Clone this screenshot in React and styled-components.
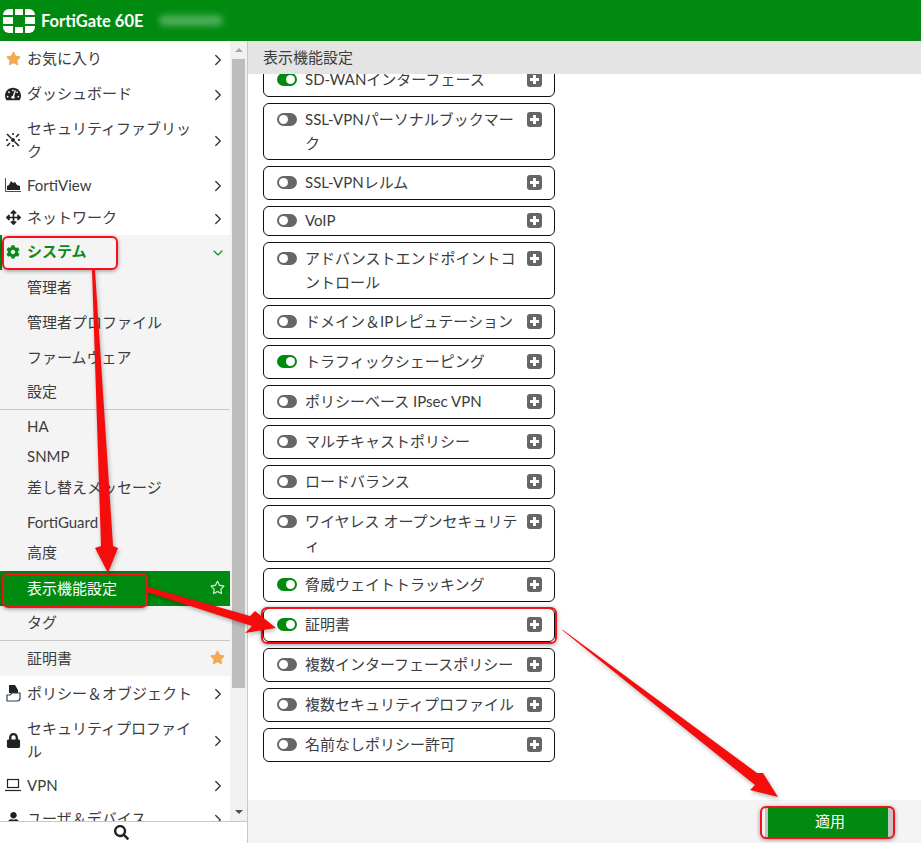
import React from "react";
import styled, { createGlobalStyle } from "styled-components";
import { FaTachometerAlt, FaCog, FaArrowsAlt, FaLock, FaSearch, FaUser, FaStar, FaRegStar } from "react-icons/fa";
import { ChevronRight, ChevronDown } from "lucide-react";

const Global = createGlobalStyle`
  html, body { margin: 0; height: 100%; overflow: hidden; background: #fff; }
  * { box-sizing: border-box; }
  body { font-family: "Lato", "Noto Sans CJK JP", sans-serif; font-size: 15px; color: #3c3c3c; }
`;
const Page = styled.div`position: relative; width: 921px; height: 843px; display: flex; flex-direction: column; overflow: hidden;`;
const Header = styled.header`height: 41px; flex: none; background: #008a10; display: flex; align-items: center; padding-left: 3px; color: #fff;`;
const Brand = styled.span`font-weight: 700; font-size: 16.5px; margin-left: 6px; white-space: nowrap;`;
const Blur = styled.span`width: 64px; height: 11px; margin-left: 16px; background: rgba(255,255,255,.3); filter: blur(3px); border-radius: 5px;`;
const Body = styled.div`flex: 1; display: flex; min-height: 0;`;
const Sidebar = styled.aside`width: 248px; flex: none; border-right: 1px solid #c8c8c8; display: flex; flex-direction: column;`;
const SideTop = styled.div`flex: 1; display: flex; min-height: 0;`;
const Nav = styled.nav`width: 230px; flex: none; overflow: hidden;`;
const Row = styled.div`
  height: ${p => p.$h || 35}px; flex: none; display: flex; align-items: center;
  padding-left: ${p => p.$sub ? 27 : 0}px;
  padding-bottom: ${p => Math.max(p.$lift || 0, 0)}px;
  padding-top: ${p => Math.max(-(p.$lift || 0), 0)}px;
  background: ${p => p.$active ? "#008a10" : "transparent"};
  color: ${p => p.$active ? "#fff" : p.$open ? "#0b8a1a" : "inherit"};
  font-weight: ${p => p.$open ? 700 : 400};
  box-shadow: ${p => p.$open ? "inset 2px 0 0 #008a10" : "none"};
`;
const IconSlot = styled.span`width: 27px; flex: none; display: flex; align-items: center; justify-content: center; padding-right: 1px; color: #222;`;
const Label = styled.span`flex: 1; line-height: 23px; max-width: 168px; margin-right: auto;`;
const Arrow = styled.span`width: 24px; margin-left: auto; padding-top: 2px; display: flex; justify-content: center; color: #333;`;
const EndStar = styled.span`margin-left: auto; margin-right: 5px; display: flex; color: ${p => p.$c};`;
const Section = styled.div`background: #f4f4f4;`;
const Sep = styled.div`height: 1px; background: #c8c8c8;`;
const Scroll = styled.div`width: 17px; flex: none; background: #f1f1f1; display: flex; flex-direction: column; align-items: center;`;
const ScrollBtn = styled.div`height: 18px; flex: none; display: flex; align-items: center; justify-content: center;`;
const Tri = styled.div`width: 0; height: 0; border-left: 4px solid transparent; border-right: 4px solid transparent;
  ${p => p.$up ? "border-bottom: 4px solid #a8a8a8;" : "border-top: 4px solid #505050;"}`;
const Thumb = styled.div`width: 13px; height: 629px; background: #bdbdbd; flex: none;`;
const Gap = styled.div`flex: 1;`;
const SearchBar = styled.div`height: 22px; flex: none; border-top: 1px solid #c8c8c8; display: flex; align-items: center; justify-content: center; color: #222; padding-right: 4px;`;
const Main = styled.main`flex: 1; display: flex; flex-direction: column; min-width: 0;`;
const TitleBar = styled.div`height: 33px; flex: none; background: #e4e4e4; display: flex; align-items: center; padding: 0 0 3px 15px;`;
const Content = styled.div`flex: 1; min-height: 0; overflow: hidden; padding-left: 15px;`;
const List = styled.div`width: 292px; margin-top: -11px; display: flex; flex-direction: column; gap: 6px;`;
const Card = styled.div`
  height: ${p => p.$h || 34}px; flex: none; background: #fff; border: 1px solid #111; border-radius: 6px;
  display: flex; align-items: flex-start; padding: ${p => p.$top || 5}px 12px 0 13px; color: #3c3c3c;
`;
const Toggle = styled.span`
  width: 20px; height: 13px; flex: none; margin-top: 4px; border-radius: 7px; position: relative;
  background: ${p => p.$on ? "#008a10" : "#666"};
  &::after { content: ""; position: absolute; top: 2px; width: 9px; height: 9px; border-radius: 50%; background: #fff;
    ${p => p.$on ? "right: 2px;" : "left: 2px;"} }
`;
const CardText = styled.span`flex: 1; margin-left: 8px; line-height: 24px; margin-top: -2px; white-space: normal;`;
const Plus = styled.span`width: 15px; height: 15px; flex: none; margin-top: 3px; margin-left: 6px; background: #666; border-radius: 3px; position: relative;
  &::before { content: ""; position: absolute; left: 3px; top: 6px; width: 9px; height: 3px; background: #fff; }
  &::after { content: ""; position: absolute; left: 6px; top: 3px; width: 3px; height: 9px; background: #fff; }
`;
const Footer = styled.div`height: 43px; flex: none; background: #f4f4f4; display: flex; justify-content: flex-end; padding: 8px 33px 6px 0;`;
const Apply = styled.button`width: 120px; height: 29px; border: 0; background: #008a10; color: #fff; font: inherit; padding: 0 0 4px 4px; box-shadow: -3px 0 0 #c4c4c4, 5px 0 0 #c4c4c4;`;
const Mark = styled.div`
  position: absolute; left: ${p => p.$x}px; top: ${p => p.$y}px; width: ${p => p.$w}px; height: ${p => p.$ht}px;
  border: 2px solid #f4111b; border-radius: 6px; box-shadow: 0 1px 4px rgba(0,0,0,.4); pointer-events: none;
`;
const Overlay = styled.svg`position: absolute; left: 0; top: 0; pointer-events: none; filter: drop-shadow(1px 2px 2px rgba(0,0,0,.3));`;

const Logo = () => (
  <svg width="32" height="24" viewBox="0 0 32 24" fill="#fff">
    <path d="M0 6a6 6 0 0 1 6-6h4v6H0z" /><rect x="12" y="0" width="8" height="6" /><path d="M22 0h4a6 6 0 0 1 6 6H22z" />
    <rect x="0" y="8" width="10" height="7" /><rect x="22" y="8" width="10" height="7" />
    <path d="M0 17h10v7H6a6 6 0 0 1-6-6z" /><rect x="12" y="18" width="8" height="6" /><path d="M22 17h10v1a6 6 0 0 1-6 6h-4z" />
  </svg>
);
const Fabric = () => (
  <svg width="16" height="16" viewBox="0 0 16 16" stroke="#222" strokeWidth="1.500" fill="#222">
    <path d="M2 2l4.500 4.500M14 14l-4.500-4.500M14 2l-3 3M2 14l3-3M8 1v2M1 8h2M15 8h-2M8 15v-2" />
    <circle cx="8" cy="8" r="1.200" />
  </svg>
);
const Area = () => (
  <svg width="16" height="14" viewBox="0 0 16 14">
    <path d="M0.500 0v13.500H16" fill="none" stroke="#33506b" strokeWidth="1" />
    <path d="M2 12V8l2-1 2-4 2 2 2-1 2 3 3 1v4z" fill="#222" />
  </svg>
);
const Folder = () => (
  <svg width="15" height="18" viewBox="0 0 15 18">
    <path d="M3 1h6l3 5v3H3z" fill="#222" />
    <path d="M1 17v-6h3l2-2h8v5a3 3 0 0 1-3 3z" fill="#fff" stroke="#33405b" strokeWidth="1.200" />
  </svg>
);
const Laptop = () => (
  <svg width="16" height="14" viewBox="0 0 16 14" fill="none" stroke="#222" strokeWidth="1.200">
    <rect x="2.500" y="1.500" width="11" height="8" /><path d="M0 12.500h16" />
  </svg>
);

const Cr = () => <Arrow><ChevronRight size={18} strokeWidth={1.700} /></Arrow>;
const Top = ({ icon, label, h, lift }) => (
  <Row $h={h} $lift={lift}><IconSlot>{icon}</IconSlot><Label>{label}</Label><Cr /></Row>
);

const features = [
  ["SD-WANインターフェース", 1], ["SSL-VPNパーソナルブックマーク", 0, 57], ["SSL-VPNレルム", 0],
  ["VoIP", 0, 30, 3], ["アドバンストエンドポイントコントロール", 0, 57], ["ドメイン＆IPレピュテーション", 0],
  ["トラフィックシェーピング", 1], ["ポリシーベース IPsec VPN", 0], ["マルチキャストポリシー", 0], ["ロードバランス", 0],
  ["ワイヤレス オープンセキュリティ", 0, 57], ["脅威ウェイトトラッキング", 1], ["証明書", 1],
  ["複数インターフェースポリシー", 0], ["複数セキュリティプロファイル", 0], ["名前なしポリシー許可", 0],
];

export default function App() {
  return (
    <Page>
      <Global />
      <Header><Logo /><Brand>FortiGate 60E</Brand><Blur /></Header>
      <Body>
        <Sidebar>
          <SideTop>
            <Nav>
              <Top icon={<FaStar size={15} color="#f5a852" />} label="お気に入り" />
              <Top icon={<FaTachometerAlt size={16} />} label="ダッシュボード" />
              <Top icon={<Fabric />} label="セキュリティファブリック" h={57} />
              <Top icon={<Area />} label="FortiView" h={34} />
              <Top icon={<FaArrowsAlt size={15} />} label="ネットワーク" h={33} lift={2} />
              <Section>
                <Row $open $lift={2}>
                  <IconSlot><FaCog size={14} color="#0b8a1a" /></IconSlot>
                  <Label>システム</Label>
                  <Arrow><ChevronDown size={16} strokeWidth={1.700} color="#0b8a1a" /></Arrow>
                </Row>
                <Row $sub $lift={2}>管理者</Row>
                <Row $sub $lift={3}>管理者プロファイル</Row>
                <Row $sub $lift={2}>ファームウェア</Row>
                <Row $sub $h={34} $lift={3}>設定</Row>
                <Sep />
                <Row $sub $h={32}>HA</Row>
                <Row $sub $h={30} $lift={2}>SNMP</Row>
                <Row $sub $h={33} $lift={5}>差し替えメッセージ</Row>
                <Row $sub $h={33}>FortiGuard</Row>
                <Row $sub $h={33} $lift={7}>高度</Row>
                <Row $sub $active $lift={3}>
                  表示機能設定
                  <EndStar $c="#cfe8d0"><FaRegStar size={15} /></EndStar>
                </Row>
                <Row $sub $h={34} $lift={3}>タグ</Row>
                <Sep />
                <Row $sub $lift={2}>
                  証明書
                  <EndStar $c="#f5a852"><FaStar size={15} /></EndStar>
                </Row>
              </Section>
              <Top icon={<Folder />} label="ポリシー＆オブジェクト" h={34} />
              <Top icon={<FaLock size={15} />} label="セキュリティプロファイル" h={57} lift={-3} />
              <Top icon={<Laptop />} label="VPN" lift={-1} />
              <Top icon={<FaUser size={13} />} label="ユーザ＆デバイス" lift={2} />
            </Nav>
            <Scroll>
              <ScrollBtn><Tri $up /></ScrollBtn>
              <Thumb />
              <Gap />
              <ScrollBtn><Tri /></ScrollBtn>
            </Scroll>
          </SideTop>
          <SearchBar><FaSearch size={15} /></SearchBar>
        </Sidebar>
        <Main>
          <TitleBar>表示機能設定</TitleBar>
          <Content>
            <List>
              {features.map(([t, on, h, top]) => (
                <Card key={t} $h={h} $top={top}>
                  <Toggle $on={!!on} />
                  <CardText>{t}</CardText>
                  <Plus />
                </Card>
              ))}
            </List>
          </Content>
          <Footer><Apply>適用</Apply></Footer>
        </Main>
      </Body>
      <Mark $x={2} $y={236} $w={116} $ht={34} />
      <Mark $x={2} $y={573} $w={146} $ht={35} />
      <Mark $x={261} $y={607} $w={296} $ht={37} />
      <Mark $x={760} $y={806} $w={135} $ht={33} />
      <Overlay width="921" height="843" viewBox="0 0 921 843">
        <polygon fill="#f50d0d" points="92,270 95,270 113,546 118,548 108,573 95,548 101,546" />
        <polygon fill="#f50d0d" points="148,587 250,616 255,611 276,628 245,633 252,626 147,592" />
        <polygon fill="#f50d0d" points="562,630 563,630 757,773 763,773 778,797 750,790 755,785" />
      </Overlay>
    </Page>
  );
}
